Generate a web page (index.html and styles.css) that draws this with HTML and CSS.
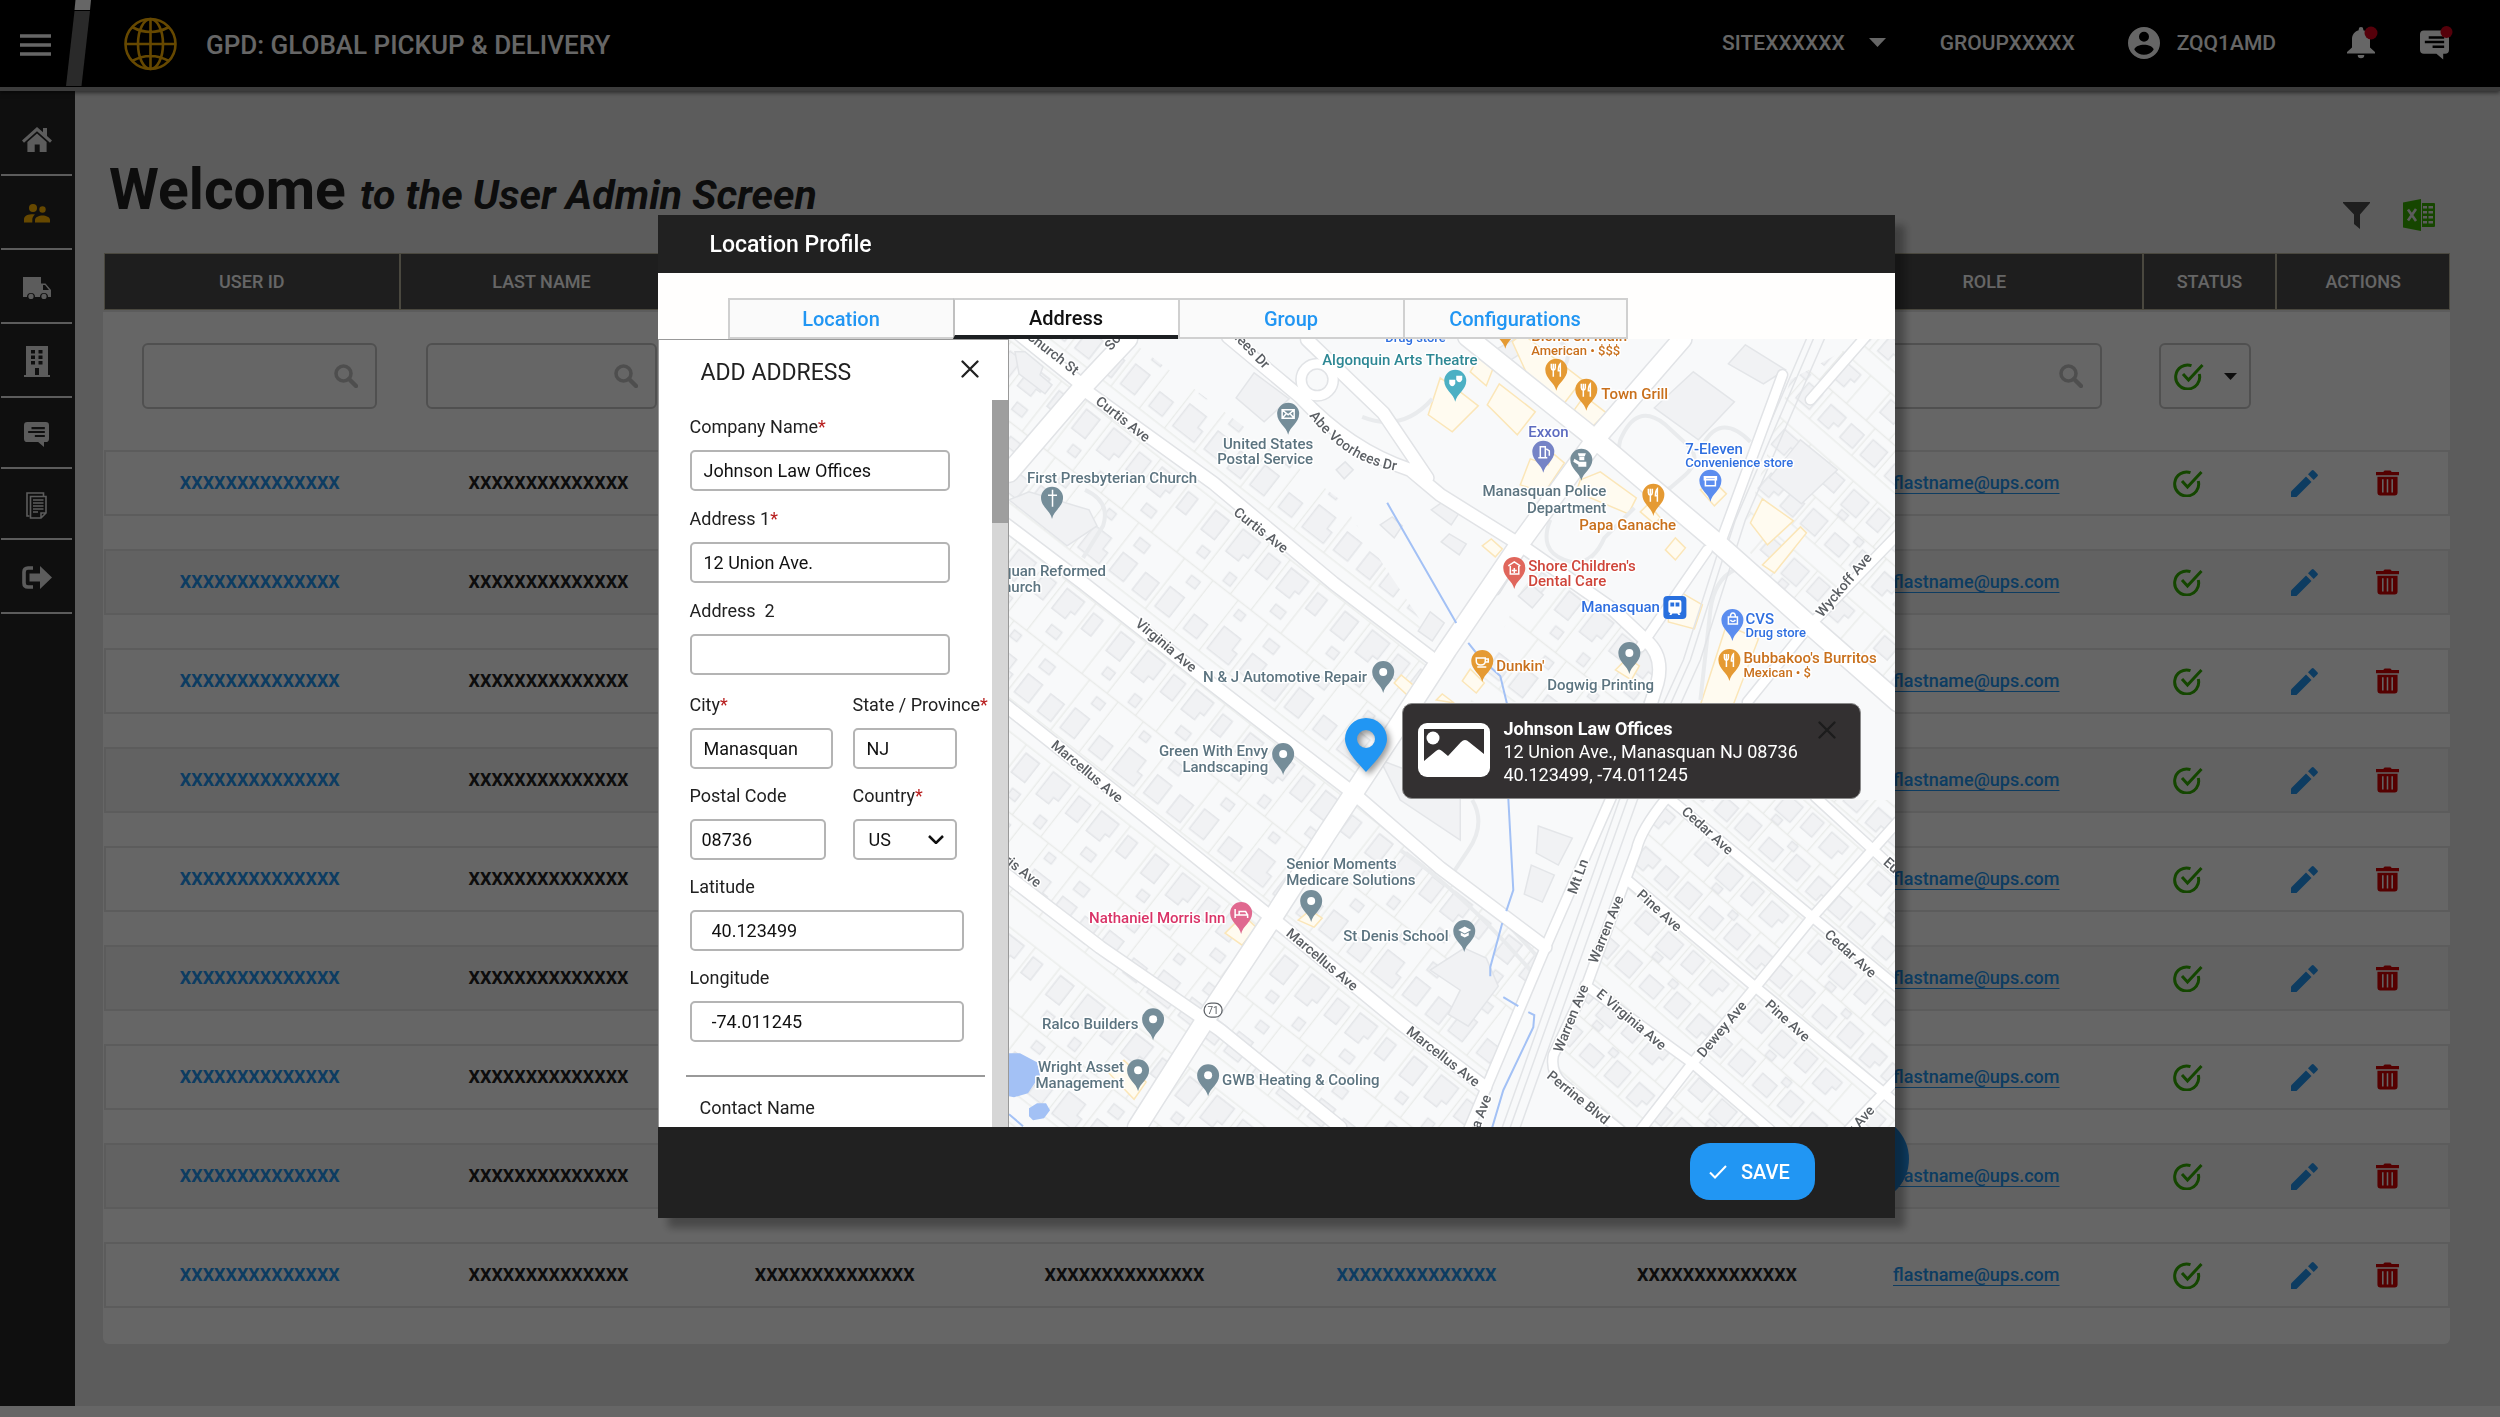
FILE: index.html
```html
<!DOCTYPE html>
<html lang="en">
<head>
<meta charset="utf-8">
<meta name="viewport" content="width=device-width, initial-scale=1">
<title>GPD: Global Pickup &amp; Delivery</title>
<link rel="stylesheet" href="styles.css">
</head>
<body>
<svg class="defs" aria-hidden="true">
  <symbol id="i-search" viewBox="0 0 24 24"><circle cx="9.5" cy="9.5" r="7.5" fill="none" stroke="currentColor" stroke-width="3.6"/><path d="M15 15l7 7" stroke="currentColor" stroke-width="4.4" stroke-linecap="round"/></symbol>
  <symbol id="i-ok" viewBox="0 0 30 28"><path d="M17.500 3.600A12 12 0 1 0 25.300 12" fill="none" stroke="currentColor" stroke-width="3"/><path d="M9 12l5.500 6L28.500 3" fill="none" stroke="currentColor" stroke-width="3"/></symbol>
  <symbol id="i-edit" viewBox="0 0 27 27"><path d="M0 21.500V27h5.500L20.500 12 15 6.500z"/><path d="M26.400 6.300a1.500 1.500 0 0 0 0-2.100L22.800.6a1.500 1.500 0 0 0-2.100 0L17 4.300 22.700 10z"/></symbol>
  <symbol id="i-trash" viewBox="0 0 24 26"><path fill-rule="evenodd" d="M0 1.500h7.500L9 0h6l1.500 1.500H24V5H0zM1.500 6.500h21V23a3 3 0 0 1-3 3h-15a3 3 0 0 1-3-3zM6.300 9v14h1.600V9zm4.900 0v14h1.600V9zm4.900 0v14h1.600V9z"/></symbol>
  <symbol id="i-chat" viewBox="0 0 30 30"><path fill-rule="evenodd" d="M4 0h22a4 4 0 0 1 4 4v16a4 4 0 0 1-4 4h-2l0 6-7-6H4a4 4 0 0 1-4-4V4a4 4 0 0 1 4-4zM9 6v2.600h16V6zM5 10.700v2.600h20v-2.600zM13 15.500v2.600h12v-2.600z"/></symbol>
  <symbol id="i-close" viewBox="0 0 18 18"><path d="M1.500 1.500l15 15M16.500 1.500l-15 15" stroke="currentColor" stroke-width="2.300" stroke-linecap="round"/></symbol>
</svg>

<header class="topbar">
  <button class="icon-btn menu" aria-label="Menu"><svg width="31" height="22" viewBox="0 0 31 22"><path d="M0 2h31M0 11h31M0 20h31" stroke="currentColor" stroke-width="3.400"/></svg></button>
  <svg class="slash" width="26" height="87" viewBox="0 0 26 87" aria-hidden="true"><path d="M9.500 0H25L24 10H8.500z" fill="#fff"/><path d="M8.500 11H24L15.500 86H0z" fill="#696969"/></svg>
  <svg class="globe" width="53" height="54" viewBox="0 0 53 54" aria-hidden="true"><g fill="none" stroke="#ffb500" stroke-width="2.600"><circle cx="26.500" cy="27" r="25"/><ellipse cx="26.500" cy="27" rx="12.500" ry="25"/><path d="M26.500 2v50M1.500 27h50M8 10q18.500 10 37 0M8 44q18.500-10 37 0"/></g></svg>
  <div class="brand">GPD: GLOBAL PICKUP &amp; DELIVERY</div>
  <button class="icon-btn site">SITEXXXXXX <svg width="17" height="9" viewBox="0 0 17 9"><path d="M0 0h17L8.500 9z"/></svg></button>
  <span class="group">GROUPXXXXX</span>
  <button class="icon-btn user"><svg width="32" height="32" viewBox="0 0 32 32"><path fill-rule="evenodd" d="M16 0a16 16 0 1 1 0 32 16 16 0 0 1 0-32zm0 4.800a5 5 0 1 0 0 10 5 5 0 0 0 0-10zm0 13c-4 0-9.600 2-9.600 4.900a11.500 11.500 0 0 0 19.200 0c0-2.900-5.600-4.900-9.600-4.900z"/></svg>ZQQ1AMD</button>
  <button class="icon-btn bell" aria-label="Notifications"><svg width="32" height="34" viewBox="0 0 32 34"><path d="M14 1a2.300 2.300 0 0 1 2.300 2.300v1C20.500 5.300 23 9 23 13v8.500L28 26v1.500H0V26l5-4.500V13c0-4 2.500-7.700 6.700-8.700v-1A2.300 2.300 0 0 1 14 1zM10.700 29h6.600a3.300 3.300 0 0 1-6.600 0z"/><circle cx="24" cy="7" r="6.500" fill="#d4001a"/></svg></button>
  <button class="icon-btn msgs" aria-label="Messages"><svg width="34" height="34" viewBox="0 0 34 34"><use href="#i-chat" x="0" y="4" width="29" height="30"/><circle cx="26.500" cy="6" r="6" fill="#d4001a"/></svg></button>
</header>

<div class="shell">
  <nav class="side" aria-label="Main">
    <a href="#home" aria-label="Home"><svg width="30" height="25" viewBox="0 0 30 25"><path d="M15 0l6 5.300V1h4v8l5 4.500-2 2.200L15 4.300 2 15.700 0 13.500z"/><path fill-rule="evenodd" d="M15 6.600l9.600 8.400V25H5.400V15zM12.700 17.500V25h5v-7.500z"/></svg></a>
    <a href="#users" class="on" aria-label="Users"><svg width="26" height="19" viewBox="0 0 26 19"><circle cx="9" cy="4" r="4"/><circle cx="18.500" cy="5.500" r="3.200"/><path d="M0 18.500v-3c0-4 4.500-5.200 9-5.200l2 .1c-1.500 1-2.700 3-2.700 5v3z"/><path d="M11 18.500v-2.500c0-3 4-4.500 7.500-4.500S26 13 26 16v2.500z"/></svg></a>
    <a href="#fleet" aria-label="Fleet"><svg width="28" height="22" viewBox="0 0 28 22"><path fill-rule="evenodd" d="M0 0h18v6.500h4.500L28 13v7h-3a4 4 0 0 0-8 0h-5a4 4 0 0 0-8 0H0zM20 8v5h6l-4-5z"/><circle cx="8" cy="19.400" r="2.600"/><circle cx="21" cy="19.400" r="2.600"/></svg></a>
    <a href="#sites" aria-label="Sites"><svg width="26" height="31" viewBox="0 0 26 31"><path fill-rule="evenodd" d="M2 0h22v29h2v2H0v-2h2zM7 4v3.500h4V4zm7.500 0v3.500h4V4zM7 9.500V13h4V9.500zm7.500 0V13h4V9.500zM7 15v3.500h4V15zm7.500 0v3.500h4V15zM11 22v7h4v-7z"/></svg></a>
    <a href="#messages" aria-label="Messages"><svg width="25" height="25"><use href="#i-chat"/></svg></a>
    <a href="#reports" aria-label="Reports"><svg width="21" height="27" viewBox="0 0 21 27"><g fill="none" stroke="currentColor" stroke-width="1.600"><path d="M3.500 24H1V1h16.500v3"/><path d="M4.500 4.500H20V21l-5 5H4.500zM15 26v-5h5M7 8h10.500M7 11h10.500M7 14h10.500M7 17h10.500M7 20h5"/></g></svg></a>
    <a href="#logout" aria-label="Log out"><svg width="30" height="23" viewBox="0 0 30 23"><path d="M11 2H6Q2 2 2 6v11q0 4 4 4h5" fill="none" stroke="currentColor" stroke-width="3.600"/><path d="M7.500 7.500H18V0l12 11.500L18 23v-7.500H7.500z"/></svg></a>
  </nav>

  <main class="main">
    <div class="head">
      <h1>Welcome <em>to the User Admin Screen</em></h1>
      <button class="icon-btn filter" aria-label="Filter"><svg width="27" height="27" viewBox="0 0 27 27"><path d="M0 0h27v1L17 12.500V27l-6-5v-9.500L0 1z"/></svg></button>
      <button class="icon-btn excel" aria-label="Export to Excel"><svg width="32" height="32" viewBox="0 0 32 32"><path d="M0 3.500L18 0v32L0 28.500z"/><path fill-rule="evenodd" d="M19 4h12q1 0 1 1v22q0 1-1 1H19zM20 7v2.500h4V7zm5.500 0v2.500H30V7zM20 12v2.500h4V12zm5.500 0v2.500H30V12zM20 17v2.500h4V17zm5.500 0v2.500H30V17zM20 22v2.500h4V22zm5.500 0v2.500H30V22z"/><path d="M5 10.500l8 11.500M13 10L5 21.500" stroke="#e6e6e6" stroke-width="2.600"/></svg></button>
    </div>
    <div class="panel">
      <table class="grid">
        <colgroup><col class="c1"><col class="c2"><col class="c3"><col class="c4"><col class="c5"><col class="c6"><col class="c7"><col class="c8"><col class="c9"></colgroup>
        <thead><tr><th>USER ID</th><th>LAST NAME</th><th>FIRST NAME</th><th>PHONE</th><th>SITE</th><th>GROUP</th><th>ROLE</th><th>STATUS</th><th>ACTIONS</th></tr></thead>
        <tbody>
          <tr class="filters">
            <td><label class="search"><input type="text" aria-label="Filter user ID"><svg><use href="#i-search"/></svg></label></td>
            <td><label class="search"><input type="text" aria-label="Filter last name"><svg><use href="#i-search"/></svg></label></td>
            <td></td><td></td><td></td><td></td>
            <td><label class="search"><input type="text" aria-label="Filter role"><svg><use href="#i-search"/></svg></label></td>
            <td><button class="pick" aria-label="Filter status"><svg class="ok"><use href="#i-ok"/></svg><svg width="13" height="7" viewBox="0 0 13 7"><path d="M0 0h13L6.500 7z"/></svg></button></td>
            <td></td>
          </tr>
          <tr><td><a href="#u1">XXXXXXXXXXXXXX</a></td><td>XXXXXXXXXXXXXX</td><td>XXXXXXXXXXXXXX</td><td>XXXXXXXXXXXXXX</td><td><a href="#s1">XXXXXXXXXXXXXX</a></td><td>XXXXXXXXXXXXXX</td><td><a class="mail" href="mailto:flastname@ups.com">flastname@ups.com</a></td><td><svg class="ok"><use href="#i-ok"/></svg></td><td><button class="icon-btn edit" aria-label="Edit"><svg><use href="#i-edit"/></svg></button><button class="icon-btn del" aria-label="Delete"><svg><use href="#i-trash"/></svg></button></td></tr>
          <tr><td><a href="#u2">XXXXXXXXXXXXXX</a></td><td>XXXXXXXXXXXXXX</td><td>XXXXXXXXXXXXXX</td><td>XXXXXXXXXXXXXX</td><td><a href="#s2">XXXXXXXXXXXXXX</a></td><td>XXXXXXXXXXXXXX</td><td><a class="mail" href="mailto:flastname@ups.com">flastname@ups.com</a></td><td><svg class="ok"><use href="#i-ok"/></svg></td><td><button class="icon-btn edit" aria-label="Edit"><svg><use href="#i-edit"/></svg></button><button class="icon-btn del" aria-label="Delete"><svg><use href="#i-trash"/></svg></button></td></tr>
          <tr><td><a href="#u3">XXXXXXXXXXXXXX</a></td><td>XXXXXXXXXXXXXX</td><td>XXXXXXXXXXXXXX</td><td>XXXXXXXXXXXXXX</td><td><a href="#s3">XXXXXXXXXXXXXX</a></td><td>XXXXXXXXXXXXXX</td><td><a class="mail" href="mailto:flastname@ups.com">flastname@ups.com</a></td><td><svg class="ok"><use href="#i-ok"/></svg></td><td><button class="icon-btn edit" aria-label="Edit"><svg><use href="#i-edit"/></svg></button><button class="icon-btn del" aria-label="Delete"><svg><use href="#i-trash"/></svg></button></td></tr>
          <tr><td><a href="#u4">XXXXXXXXXXXXXX</a></td><td>XXXXXXXXXXXXXX</td><td>XXXXXXXXXXXXXX</td><td>XXXXXXXXXXXXXX</td><td><a href="#s4">XXXXXXXXXXXXXX</a></td><td>XXXXXXXXXXXXXX</td><td><a class="mail" href="mailto:flastname@ups.com">flastname@ups.com</a></td><td><svg class="ok"><use href="#i-ok"/></svg></td><td><button class="icon-btn edit" aria-label="Edit"><svg><use href="#i-edit"/></svg></button><button class="icon-btn del" aria-label="Delete"><svg><use href="#i-trash"/></svg></button></td></tr>
          <tr><td><a href="#u5">XXXXXXXXXXXXXX</a></td><td>XXXXXXXXXXXXXX</td><td>XXXXXXXXXXXXXX</td><td>XXXXXXXXXXXXXX</td><td><a href="#s5">XXXXXXXXXXXXXX</a></td><td>XXXXXXXXXXXXXX</td><td><a class="mail" href="mailto:flastname@ups.com">flastname@ups.com</a></td><td><svg class="ok"><use href="#i-ok"/></svg></td><td><button class="icon-btn edit" aria-label="Edit"><svg><use href="#i-edit"/></svg></button><button class="icon-btn del" aria-label="Delete"><svg><use href="#i-trash"/></svg></button></td></tr>
          <tr><td><a href="#u6">XXXXXXXXXXXXXX</a></td><td>XXXXXXXXXXXXXX</td><td>XXXXXXXXXXXXXX</td><td>XXXXXXXXXXXXXX</td><td><a href="#s6">XXXXXXXXXXXXXX</a></td><td>XXXXXXXXXXXXXX</td><td><a class="mail" href="mailto:flastname@ups.com">flastname@ups.com</a></td><td><svg class="ok"><use href="#i-ok"/></svg></td><td><button class="icon-btn edit" aria-label="Edit"><svg><use href="#i-edit"/></svg></button><button class="icon-btn del" aria-label="Delete"><svg><use href="#i-trash"/></svg></button></td></tr>
          <tr><td><a href="#u7">XXXXXXXXXXXXXX</a></td><td>XXXXXXXXXXXXXX</td><td>XXXXXXXXXXXXXX</td><td>XXXXXXXXXXXXXX</td><td><a href="#s7">XXXXXXXXXXXXXX</a></td><td>XXXXXXXXXXXXXX</td><td><a class="mail" href="mailto:flastname@ups.com">flastname@ups.com</a></td><td><svg class="ok"><use href="#i-ok"/></svg></td><td><button class="icon-btn edit" aria-label="Edit"><svg><use href="#i-edit"/></svg></button><button class="icon-btn del" aria-label="Delete"><svg><use href="#i-trash"/></svg></button></td></tr>
          <tr><td><a href="#u8">XXXXXXXXXXXXXX</a></td><td>XXXXXXXXXXXXXX</td><td>XXXXXXXXXXXXXX</td><td>XXXXXXXXXXXXXX</td><td><a href="#s8">XXXXXXXXXXXXXX</a></td><td>XXXXXXXXXXXXXX</td><td><a class="mail" href="mailto:flastname@ups.com">flastname@ups.com</a></td><td><svg class="ok"><use href="#i-ok"/></svg></td><td><button class="icon-btn edit" aria-label="Edit"><svg><use href="#i-edit"/></svg></button><button class="icon-btn del" aria-label="Delete"><svg><use href="#i-trash"/></svg></button></td></tr>
          <tr><td><a href="#u9">XXXXXXXXXXXXXX</a></td><td>XXXXXXXXXXXXXX</td><td>XXXXXXXXXXXXXX</td><td>XXXXXXXXXXXXXX</td><td><a href="#s9">XXXXXXXXXXXXXX</a></td><td>XXXXXXXXXXXXXX</td><td><a class="mail" href="mailto:flastname@ups.com">flastname@ups.com</a></td><td><svg class="ok"><use href="#i-ok"/></svg></td><td><button class="icon-btn edit" aria-label="Edit"><svg><use href="#i-edit"/></svg></button><button class="icon-btn del" aria-label="Delete"><svg><use href="#i-trash"/></svg></button></td></tr>
        </tbody>
      </table>
      <button class="fab" aria-label="Add user"></button>
    </div>
  </main>
</div>

<div class="overlay">
  <section class="modal" role="dialog" aria-labelledby="dlg-title">
    <h2 class="modal-head" id="dlg-title">Location Profile</h2>
    <div class="tabs" role="tablist">
      <button role="tab">Location</button><button role="tab" aria-selected="true">Address</button><button role="tab">Group</button><button role="tab">Configurations</button>
    </div>
    <div class="modal-body">
      <form class="form">
        <div class="form-head"><h3>ADD ADDRESS</h3><button type="button" class="icon-btn" aria-label="Close"><svg width="18" height="18"><use href="#i-close"/></svg></button></div>
        <div class="scroll">
          <div class="fields">
            <div class="stack">
              <div class="field"><label for="company">Company Name<b>*</b></label><input id="company" value="Johnson Law Offices"></div>
              <div class="field"><label for="a1">Address 1<b>*</b></label><input id="a1" value="12 Union Ave."></div>
              <div class="field"><label for="a2">Address &nbsp;2</label><input id="a2"></div>
            </div>
            <div class="pairs">
              <div class="field"><label for="city">City<b>*</b></label><input id="city" value="Manasquan"></div>
              <div class="field"><label for="state">State / Province<b>*</b></label><input id="state" value="NJ"></div>
              <div class="field postal"><label for="zip">Postal Code</label><input id="zip" value="08736"></div>
              <div class="field"><label for="country">Country<b>*</b></label><select id="country"><option>US</option></select></div>
              <div class="field wide"><label for="lat">Latitude</label><input id="lat" value="40.123499"></div>
              <div class="field wide"><label for="lon">Longitude</label><input id="lon" value="-74.011245"></div>
            </div>
            <hr>
            <div class="contact">Contact Name</div>
          </div>
          <div class="bar" aria-hidden="true"><div class="thumb"></div></div>
        </div>
      </form>
      <div class="map">
        <svg class="tiles" viewBox="1009 339 886 788" preserveAspectRatio="xMidYMid slice" role="img" aria-label="Map of Manasquan">
          <defs>
            <pattern id="lots" width="164" height="154" patternUnits="userSpaceOnUse" patternTransform="translate(1213 483) rotate(38)">
              <path d="M0 13H164M0 77H164M0 141H164M14 13V77M46 13V77M82 13V77M108 13V77M146 13V77M24 77V141M60 77V141M92 77V141M130 77V141" class="lot"/>
              <path class="bld" d="M19 20h17v24h-17zM52 18h22v20h-6v8h-16zM87 21h15v22h-15zM114 19h22v16h-5v9h-17zM150 22h12v20h-12zM2 112h17v22h-17zM30 108h18v25h-18zM66 115h17v18h-17zM97 106h21v14h6v14h-27zM136 110h18v23h-18zM30 56h10v9h-10zM68 60h9v11h-9zM124 57h13v9h-13zM40 86h11v9h-11zM98 84h9v8h-9zM140 88h13v10h-13z"/>
            </pattern>
            <pattern id="lots2" width="150" height="91" patternUnits="userSpaceOnUse" patternTransform="translate(1755 987) rotate(41)">
              <path d="M0 9H150M0 46H150M0 82H150M12 9V46M42 9V46M74 9V46M100 9V46M136 9V46M24 46V82M54 46V82M88 46V82M118 46V82" class="lot"/>
              <path class="bld" d="M17 14h18v17h-18zM48 15h20v20h-20zM79 13h15v19h-15zM106 15h22v10h-5v10h-17zM3 58h17v18h-17zM30 56h19v20h-19zM62 60h19v16h-19zM94 55h18v20h-18zM125 57h20v12h-6v8h-14zM52 38h9v7h-9zM82 48h8v7h-8z"/>
            </pattern>
            <symbol id="pin" viewBox="-11 -11 22 33" overflow="visible"><path d="M0 21C-1.500 13-11 9-11 0a11 11 0 0 1 22 0C11 9 1.500 13 0 21z"/></symbol>
            <symbol id="food" viewBox="-11 -11 22 33" overflow="visible"><use href="#pin" x="-11" y="-11" width="22" height="33"/><path d="M-5-6v4q0 2 2 2.500V7M-1-6v4q0 2-2 2.500V-6M4 7V-6q-2 2-2 7h2" fill="none" stroke="#fff" stroke-width="1.500"/></symbol>
            <path id="abe" d="M1309 416C1328 440 1352 463 1396 471"/>
          </defs>
          <rect x="1009" y="339" width="886" height="788" fill="#f8f9fa"/>
          <path d="M1128 339L1340 500 1440 650 1360 790 1545 947 1470 1127H1009V339z" fill="url(#lots)"/>
          <path d="M1667 800L1640 843 1552 1065 1620 1127H1895V800zM1865 339H1895V700L1800 620 1740 540 1790 380z" fill="url(#lots2)"/>
          <path d="M1535 560L1660 640 1650 702H1470z" fill="url(#lots)"/>
          <g class="bld">
            <path d="M1693 372l41 30-36 38-44-32zM1745 345l40 25-22 14-35-20zM1800 440l37 30-36 34-32-26zM1254 373l35 26-25 23-28-24zM1025 352l18 15-3 8 12 10-7 9-26-20-4-22zM1009 500l20-8 60 18 8 16-30 20zM1538 826l34 12-14 27-22-12zM1531 865l23 10-12 27-18-8zM1464 948l22 10 12 28-30 40-20-12 12-24-30-20zM1380 760l80 30v50l-60-40z"/>
            <path d="M1336 470l9-8 8 8-9 9zM1431 510l10-7 18 10-8 12zM1441 542l8-8 17 10-7 11zM1430 612l14 11-12 18-14-10zM1518 596l12-12 13 11-11 13zM1380 525l12-8 10 9-8 12zM1495 350l18-10 10 12-14 9z"/>
          </g>
          <g class="shop">
            <path d="M1440 378l20 14 18 14-26 26-24-17zM1470 372l15-24 12 10-11 28zM1487 405l12-21 36 28-18 23zM1512 342l10-8 60 46-20 26-30-20zM1574 410l10-14 22 17-16 16zM1520 485l10-26 18 6 4-12 12 10-20 30zM1580 480l20-8 36 26-8 16-52-22zM1640 512l8-8 12 14-6 6zM1700 490l12-10 14 14-12 12zM1762 499l31 22-26 24-17-22zM1800 527l6 6-32 40-12-8zM1482 546l9-7 11 10-7 8zM1665 550l10-12 10 10-10 12zM1668 605l10-14 24 14-8 24-26-7zM1700 705l26-80 32 14-26 68zM1462 681l8-12 14 14-8 10zM1615 670l12-12 12 8-8 14zM1394 683l7-8 13 11-6 10zM1298 920l12-10 12 8-8 9zM1225 933l18-18 13 12-14 18zM1108 1072l16-12 22 22-12 17zM1436 700l6-6 12 9z"/>
          </g>
          <g class="lane">
            <path d="M1555 339q20 10 8 30M1620 440q16-38 44-16l24 22q14 14-4 30l-14 12q-12 6-22-4l-24-22q-8-8-4-22zM1700 450q18-40 50-8M1550 520q-12 30 14 40t40-22l30-30M1362 417q40 16 70-18M1400 850q60 40 130 120M1410 840q60 40 130 120M1472 800q14 24-4 50l-20 30M1700 700l10-90q4-30 24-40M1085 490q26 12 18 36l-20 32"/>
          </g>
          <g class="rail"><path d="M1813 339L1735 520 1690 660 1627 800 1510 1127M1824 339L1745 520 1700 660 1637 800 1520 1127M1806 339L1728 520 1683 660 1619 800 1502 1127"/></g>
          <g class="edge">
            <path class="w16" d="M1128 339L1082 388 1009 473M1137 1127L1207 1017 1273 917 1327 833 1397 727 1447 650 1520 543 1597 437 1682 339M1467 337L1587 433 1717 543 1807 623 1897 702"/>
            <path class="w11" d="M1020 335L1082 385M1087 392L1213 483 1333 583 1430 657M1005 524L1083 583 1213 685 1353 793 1440 868 1545 947M1005 705L1150 820 1283 927 1400 1023 1485 1087M1005 874L1100 947 1220 1030 1340 1127M1228 337L1300 397C1340 440 1380 460 1410 470L1440 495 1520 545 1613 610 1645 640Q1664 656 1657 683L1650 705M1307 340L1383 413 1427 478"/>
            <path class="w8" d="M1782 375L1720 543M1810 400L1865 337M1897 535L1807 628 1747 702M1707 550L1640 647M1612 795L1547 943 1468 1130M1667 797Q1640 830 1636 850L1587 983 1553 1055Q1550 1072 1562 1083L1620 1130M1667 797L1812 917 1897 987M1627 880L1755 987 1897 1104M1585 985L1692 1063 1770 1130M1897 822L1812 917 1755 987 1692 1063 1640 1130M1815 797L1873 850 1897 872M1897 1078L1848 1130M1550 503L1495 590"/>
            <circle class="w8" cx="1317" cy="380" r="16"/>
          </g>
          <g class="road">
            <path class="w16" d="M1128 339L1082 388 1009 473M1137 1127L1207 1017 1273 917 1327 833 1397 727 1447 650 1520 543 1597 437 1682 339M1467 337L1587 433 1717 543 1807 623 1897 702"/>
            <path class="w11" d="M1020 335L1082 385M1087 392L1213 483 1333 583 1430 657M1005 524L1083 583 1213 685 1353 793 1440 868 1545 947M1005 705L1150 820 1283 927 1400 1023 1485 1087M1005 874L1100 947 1220 1030 1340 1127M1228 337L1300 397C1340 440 1380 460 1410 470L1440 495 1520 545 1613 610 1645 640Q1664 656 1657 683L1650 705M1307 340L1383 413 1427 478"/>
            <path class="w8" d="M1782 375L1720 543M1810 400L1865 337M1897 535L1807 628 1747 702M1707 550L1640 647M1612 795L1547 943 1468 1130M1667 797Q1640 830 1636 850L1587 983 1553 1055Q1550 1072 1562 1083L1620 1130M1667 797L1812 917 1897 987M1627 880L1755 987 1897 1104M1585 985L1692 1063 1770 1130M1897 822L1812 917 1755 987 1692 1063 1640 1130M1815 797L1873 850 1897 872M1897 1078L1848 1130"/>
            <circle class="w8" cx="1317" cy="380" r="16"/>
          </g>
          <path class="creek" d="M1387 503L1456 623M1468 643L1480 658 1500 676 1507 705M1508 798L1513 890 1506 911M1502 923L1490 967V976M1503 997L1518 1006M1528 1012L1534 1015 1533 1027 1503 1090 1492 1127M1009 1114L1023 1126"/>
          <path fill="#a3c1f5" d="M1009 1053h11l17 9 3 13-12 18-14 4-5-1zM1029 1108l8-5h9l4 7-6 8-11 2-4-4z"/>

          <g class="street">
            <text transform="translate(1050 357) rotate(38)">Church St</text>
            <text transform="translate(1120 423) rotate(38)">Curtis Ave</text>
            <text transform="translate(1258 534) rotate(38)">Curtis Ave</text>
            <text transform="translate(1163 649) rotate(40)">Virginia Ave</text>
            <text transform="translate(1084 775) rotate(40)">Marcellus Ave</text>
            <text transform="translate(1010 867) rotate(38)">Morris Ave</text>
            <text transform="translate(1319 963) rotate(40)">Marcellus Ave</text>
            <text transform="translate(1440 1060) rotate(38)">Marcellus Ave</text>
            <text transform="translate(1128 331) rotate(-50)">South St</text>
            <text transform="translate(1237 342) rotate(46)">Voorhees Dr</text>
            <text transform="translate(1582 878) rotate(-70)">Mt Ln</text>
            <text transform="translate(1610 931) rotate(-68)">Warren Ave</text>
            <text transform="translate(1575 1020) rotate(-68)">Warren Ave</text>
            <text transform="translate(1656 914) rotate(42)">Pine Ave</text>
            <text transform="translate(1784 1024) rotate(42)">Pine Ave</text>
            <text transform="translate(1704 834) rotate(42)">Cedar Ave</text>
            <text transform="translate(1847 957) rotate(42)">Cedar Ave</text>
            <text transform="translate(1628 1023) rotate(40)">E Virginia Ave</text>
            <text transform="translate(1725 1032) rotate(-50)">Dewey Ave</text>
            <text transform="translate(1575 1101) rotate(39)">Perrine Blvd</text>
            <text transform="translate(1847 588) rotate(-50)">Wyckoff Ave</text>
            <text transform="translate(1478 1133) rotate(-70)">Minerva Ave</text>
            <text transform="translate(1852 1136) rotate(-48)">Dewey Ave</text>
            <text transform="translate(1906 885) rotate(42)">Euclid Ave</text>
            <text class="along"><textPath href="#abe">Abe Voorhees Dr</textPath></text>
          </g>
          <rect x="1204" y="1003" width="18" height="14" rx="7" fill="#fff" stroke="#5f6368" stroke-width="1.300"/>
          <text class="shield" x="1213" y="1014">71</text>

          <g class="gray">
            <text x="1027" y="483">First Presbyterian Church</text>
            <text class="end" x="1106" y="576">Manasquan Reformed</text><text class="end" x="1041" y="592">Church</text>
            <text class="end" x="1313" y="449">United States</text><text class="end" x="1313" y="464">Postal Service</text>
            <text class="end" x="1606" y="496">Manasquan Police</text><text class="end" x="1606" y="513">Department</text>
            <text x="1547" y="690">Dogwig Printing</text>
            <text x="1203" y="682">N &amp; J Automotive Repair</text>
            <text class="end" x="1268" y="756">Green With Envy</text><text class="end" x="1268" y="772">Landscaping</text>
            <text x="1286" y="869">Senior Moments</text><text x="1286" y="885">Medicare Solutions</text>
            <text x="1343" y="941">St Denis School</text>
            <text x="1042" y="1029">Ralco Builders</text>
            <text class="end" x="1124" y="1072">Wright Asset</text><text class="end" x="1124" y="1088">Management</text>
            <text x="1222" y="1085">GWB Heating &amp; Cooling</text>
          </g>
          <g class="orange">
            <text x="1531" y="341">Blend on Main</text><text class="sub" x="1531" y="355">American • $$$</text>
            <text x="1601" y="399">Town Grill</text>
            <text x="1579" y="530">Papa Ganache</text>
            <text x="1496" y="671">Dunkin'</text>
            <text x="1743" y="663">Bubbakoo's Burritos</text><text class="sub" x="1743" y="677">Mexican • $</text>
          </g>
          <g class="blue">
            <text class="sub" x="1385" y="342">Drug store</text>
            <text x="1685" y="454">7-Eleven</text><text class="sub" x="1685" y="467">Convenience store</text>
            <text x="1745" y="624">CVS</text><text class="sub" x="1745" y="637">Drug store</text>
            <text x="1581" y="612">Manasquan</text>
          </g>
          <text class="teal" x="1322" y="365">Algonquin Arts Theatre</text>
          <text class="indigo" x="1528" y="437">Exxon</text>
          <g class="red"><text x="1528" y="571">Shore Children's</text><text x="1528" y="586">Dental Care</text></g>
          <text class="pink" x="1089" y="923">Nathaniel Morris Inn</text>

          <g fill="#758d99">
            <use href="#pin" x="1041" y="487" width="22" height="33"/><use href="#pin" x="1277" y="403" width="22" height="33"/><use href="#pin" x="1570" y="449" width="22" height="33"/>
            <use href="#pin" x="1618" y="642" width="22" height="33"/><use href="#pin" x="1372" y="661" width="22" height="33"/><use href="#pin" x="1272" y="743" width="22" height="33"/>
            <use href="#pin" x="1300" y="890" width="22" height="33"/><use href="#pin" x="1453" y="920" width="22" height="33"/><use href="#pin" x="1142" y="1008" width="22" height="33"/>
            <use href="#pin" x="1127" y="1059" width="22" height="33"/><use href="#pin" x="1197" y="1064" width="22" height="33"/>
          </g>
          <g fill="#fff"><circle cx="1629" cy="653" r="4"/><circle cx="1383" cy="672" r="4"/><circle cx="1283" cy="754" r="4"/><circle cx="1311" cy="901" r="4"/><circle cx="1153" cy="1019" r="4"/><circle cx="1138" cy="1070" r="4"/><circle cx="1208" cy="1075" r="4"/></g>
          <g fill="#e59a33"><use href="#food" x="1494" y="317" width="22" height="33"/><use href="#food" x="1545" y="359" width="22" height="33"/><use href="#food" x="1575" y="379" width="22" height="33"/><use href="#food" x="1642" y="484" width="22" height="33"/><use href="#food" x="1718" y="649" width="22" height="33"/><use href="#pin" x="1471" y="650" width="22" height="33"/></g>
          <g fill="#5b8def"><use href="#pin" x="1699" y="470" width="22" height="33"/><use href="#pin" x="1721" y="609" width="22" height="33"/></g>
          <use href="#pin" x="1444" y="370" width="22" height="33" fill="#4cb0c4"/>
          <use href="#pin" x="1532" y="441" width="22" height="33" fill="#7583c6"/>
          <use href="#pin" x="1503" y="557" width="22" height="33" fill="#e0665c"/>
          <use href="#pin" x="1230" y="902" width="22" height="33" fill="#e0688f"/>
          <g fill="none" stroke="#fff" stroke-width="1.500">
            <path d="M1052.500 490v17M1048 495.500h9"/>
            <path d="M1282 410h12v8.500h-12zM1282 410l6 5 6-5M1282 418.500l4.500-5M1294 418.500l-4.500-5"/>
            <path d="M1235 909v9M1235 915h12.500v3M1239 915v-3.500h6.500l2 3.500"/>
            <path d="M1508 566l6-4 6 4M1510 566v8h8.500v-8M1514 568v5M1511.500 570.500h5"/>
            <path d="M1540 458v-11h5v11M1538 458h9M1546 449l3 2v5M1705 478h10v8h-10zM1704 477h12v3h-12z"/>
            <path d="M1728 617h9v7h-9zM1730 617q0-4 2.500-4t2.500 4M1730 620q2.500 3 5 0"/>
            <path d="M1476 658h9v3q0 4-4.500 4t-4.500-4zM1485 659h3v3h-3M1477 667h9"/>
          </g>
          <g fill="#fff">
            <path d="M1458 930l6.500-3.500 6.500 3.500-6.500 3.500zM1460.500 932.500l4 2 4-2v3l-4 2-4-2z"/>
            <path d="M1577.500 453.500h8l-1 3h-6zM1579 457h5v3.500h-5zM1574 459l5 3h7v5h-8v-2l-5-3z"/>
            <path d="M1449 380h6v4q-3 5-6 0zM1456 376h6v4q-3 5-6 0z"/>
          </g>
          <rect x="1663" y="596" width="23" height="23" rx="4" fill="#2970de"/>
          <path fill="#fff" fill-rule="evenodd" d="M1670 600h9q2 0 2 2v9q0 2-2 2l1 2h-2l-1-1.500h-5l-1 1.500h-2l1-2q-2 0-2-2v-9q0-2 2-2zm0 2.500v4h3.800v-4zm5.200 0v4h3.800v-4z"/>
        </svg>
        <svg class="marker" width="46" height="58" viewBox="0 0 46 58" aria-hidden="true"><path fill-rule="evenodd" d="M21 0a21 21 0 0 1 21 21c0 12-15 26-21 33C15 47 0 33 0 21A21 21 0 0 1 21 0zm0 12a9 9 0 1 0 0 18 9 9 0 0 0 0-18z" fill="#2196f3"/></svg>
        <div class="popup">
          <svg class="photo" width="72" height="54" viewBox="0 0 72 54" aria-hidden="true"><rect width="72" height="54" rx="9" fill="#fff"/><path d="M6 6h60v25L51 19q-4-4-8 0L30 33l-6-5q-3-3-6 0L6 38z" fill="#333031"/><circle cx="15" cy="15" r="6.500" fill="#fff"/></svg>
          <div><strong>Johnson Law Offices</strong><div>12 Union Ave., Manasquan NJ 08736</div><div>40.123499, -74.011245</div></div>
          <button class="icon-btn" aria-label="Close"><svg width="18" height="18"><use href="#i-close"/></svg></button>
        </div>
      </div>
    </div>
    <footer class="modal-foot"><button class="save"><svg width="18" height="14" viewBox="0 0 18 14"><path d="M1 7.500l5 5L17 1" fill="none" stroke="#fff" stroke-width="2"/></svg>SAVE</button></footer>
  </section>
</div>
</body>
</html>
```

FILE: styles.css
```css
* { box-sizing: border-box; }
body { margin: 0; background: #fff; color: #212121; font: 500 18px/22px Roboto, sans-serif; min-height: 100vh; }
button, input, select { font: inherit; color: inherit; }
svg { display: block; flex: none; fill: currentColor; }
.defs { position: absolute; width: 0; height: 0; }
.icon-btn { display: flex; align-items: center; background: none; border: 0; padding: 0; }

/* Top bar */
.topbar { display: flex; align-items: center; height: 91px; padding: 2px 46px 4px 20px; background: #000; border-bottom: 4px solid #969696; box-shadow: 0 2px 4px rgba(0,0,0,.5); color: #fff; font-size: 21px; position: relative; }
.menu { margin: 4px 15px 0 0; }
.slash { align-self: flex-start; margin-top: -2px; }
.globe { margin: 2px 29px 0 32px; }
.brand { font-size: 26px; line-height: 32px; margin-top: 4px; margin-right: auto; white-space: nowrap; }
.site { gap: 24px; margin-right: 54px; }
.group { margin-right: 53px; }
.user { gap: 17px; margin-right: 71px; }
.bell { margin-right: 41px; }

/* Sidebar */
.shell { display: flex; }
.side { flex: 0 0 75px; background: #262626; padding-right: 3px; }
.side a { display: flex; align-items: center; justify-content: center; height: 74px; margin-left: 1px; padding-top: 3px; border-bottom: 2px solid #e6e6e6; color: #e6e6e6; }
.side a:first-child { height: 85px; padding-top: 14px; }
.side a.on { color: #ffb500; }
.side a:nth-child(n+5):nth-child(-n+6) { height: 71px; }

/* Page */
.main { flex: 1; min-width: 0; background: #e6e6e6; padding: 69px 50px 62px 28px; }
.head { display: flex; align-items: center; height: 60px; padding-left: 6px; }
.head h1 { margin: 4px auto 0 0; font-size: 57px; line-height: 60px; font-weight: 700; white-space: nowrap; }
.head em { font-size: 41px; }
.filter { color: #4b4b4b; margin: 50px 33px 0 0; }
.excel { color: #37b000; margin: 50px 15px 0 0; }
.panel { position: relative; background: linear-gradient(transparent 92px, #fff 92px); padding: 0 0 3px 1px; border-radius: 0 0 6px 6px; }
.grid { width: 100%; border-collapse: separate; border-spacing: 0 33px; table-layout: fixed; }
.c1 { width: 12.6%; } .c2 { width: 12.1%; } .c3 { width: 12.3%; } .c4 { width: 12.4%; } .c5 { width: 12.5%; } .c6 { width: 11.5%; } .c7 { width: 13.5%; } .c8 { width: 5.7%; } .c9 { width: 7.4%; }
.grid th { height: 57px; padding: 0; background: #4b4b4b; border: 1px solid #b9b59e; color: #fff; font-weight: 500; }
.grid td { height: 66px; padding: 0 0 0 14px; text-align: center; font-weight: 700; border: solid #e6e6e6; border-width: 2px 0; }
.grid td:first-child { border-left-width: 2px; }
.grid td:last-child { border-right-width: 2px; }
.grid tr:nth-child(odd):not(.filters) td { background: #f6f6f6; }
.grid td:nth-child(6) { padding-left: 52px; }
.grid td:nth-child(7) { padding: 0 16px 0 0; }
.grid td:nth-child(8) { padding-left: 30px; }
.grid td a { color: #2196f3; text-decoration: none; }
.grid td a.mail { font-weight: 500; text-decoration: underline; text-underline-offset: 4px; }
.grid .filters td { height: 74px; border: 0; vertical-align: top; padding: 0 23px 0 38px; }
.grid .filters td:nth-child(2) { padding: 0 26px 0 26px; }
.grid .filters td:nth-child(7) { padding: 0 41px 0 30px; }
.grid .filters td:nth-child(8) { padding: 0 0 0 16px; }
.search { display: flex; align-items: center; height: 66px; border: 2px solid #c8c8c8; border-radius: 6px; padding-right: 17px; color: #c4c4c4; }
.search input { flex: 1; min-width: 0; height: 60px; border: 0; background: none; }
.search svg { width: 24px; height: 24px; }
.pick { display: flex; align-items: center; gap: 20px; width: 92px; height: 66px; padding: 0 0 0 13px; background: none; border: 2px solid #c8c8c8; border-radius: 6px; }
.ok { width: 30px; height: 28px; color: #32af00; }
.grid td:last-child .icon-btn { display: inline-flex; vertical-align: middle; }
.grid tr:not(.filters) td:last-child { text-align: left; padding-left: 15px; }
.edit { color: #2196f3; margin-right: 58px; }
.edit svg { width: 27px; height: 27px; }
.del { color: #d50000; }
.del svg { width: 23px; height: 26px; }
.fab { position: absolute; left: 73%; top: 894px; width: 93px; height: 90px; border: 0; border-radius: 50%; background: #2196f3; }

/* Modal */
.overlay { position: fixed; inset: 0; background: rgba(0,0,0,.6); padding: 215px 24.2% 0 26.3%; }
.modal { background: #fffefd; box-shadow: 10px 10px 8px rgba(0,0,0,.3); }
.modal-head { margin: 0; height: 58px; padding-left: 52px; background: #212121; color: #fff; font-size: 23px; line-height: 60px; font-weight: 500; }
.tabs { display: grid; grid-template-columns: repeat(4, 225px); height: 66px; padding: 25px 0 0 70px; }
.tabs button { padding: 0; background: #fafafa; border: 2px solid #d0d0d0; border-right-width: 0; color: #2196f3; font-size: 20px; }
.tabs button:last-child { border-right-width: 2px; }
.tabs button[aria-selected] { background: #fff; color: #111; border-bottom: 4px solid #1c1f22; border-left-color: #c0c0c0; }
.modal-body { display: flex; height: 788px; }
.form { flex: 0 0 351px; display: flex; flex-direction: column; background: #fff; border: 1px solid #999; border-bottom: 0; font-weight: 400; }
.form-head { display: flex; align-items: flex-start; height: 60px; padding: 20px 29px 0 42px; }
.form-head h3 { margin: 1px auto 0 0; font-size: 23px; line-height: 24px; font-weight: 400; }
.scroll { display: flex; flex: 1; overflow: hidden; }
.fields { flex: 1; min-width: 0; padding: 16px 0 0 31px; }
.stack { display: grid; gap: 17px; width: 260px; margin-bottom: 19px; }
.pairs { display: grid; grid-template-columns: 143px 104px; gap: 16px 20px; }
.field label { display: block; height: 22px; margin-bottom: 12px; white-space: nowrap; }
.field b { font-weight: 400; color: #b71c1c; }
.field input, .field select { display: block; width: 100%; height: 41px; padding: 0 12px; background: #fff; border: 2px solid #b4b4b4; border-radius: 5px; color: #111; }
.postal input { width: 136px; padding-left: 10px; }
.field select { appearance: none; padding-left: 14px; background: #fff url("data:image/svg+xml,%3Csvg xmlns='http://www.w3.org/2000/svg' width='16' height='9'%3E%3Cpath d='M1 1l7 7 7-7' fill='none' stroke='%23111' stroke-width='2.500'/%3E%3C/svg%3E") no-repeat right 11px center; }
.wide { grid-column: 1 / -1; }
.wide input { width: 274px; padding-left: 20px; }
.fields hr { width: 299px; height: 2px; margin: 33px 0 20px -4px; border: 0; background: #999; }
.contact { padding-left: 10px; }
.bar { flex: 0 0 16px; background: #d6d6d6; }
.thumb { height: 123px; background: #9e9e9e; }
.modal-foot { display: flex; justify-content: flex-end; align-items: center; height: 91px; padding: 0 80px 2px 0; background: #212121; }
.save { display: flex; align-items: center; gap: 14px; width: 125px; height: 57px; padding: 0 0 0 19px; border: 0; border-radius: 20px; background: #2196f3; color: #fff; font-size: 20px; }

/* Map */
.map { position: relative; flex: 1; min-width: 0; overflow: hidden; }
.tiles { width: 100%; height: 100%; font-size: 15px; }
.bld { fill: #f1f2f4; stroke: #e3e5e8; stroke-width: 1.500; }
.lot { fill: none; stroke: #e9ebe9; stroke-width: 1.300; }
.shop { fill: #fffbf0; stroke: #fbe6b8; stroke-width: 1.500; }
.lane { fill: none; stroke: #e9ebed; stroke-width: 4; }
.rail { fill: none; stroke: #e2e4e7; stroke-width: 1.500; }
.edge, .road { fill: none; stroke-linejoin: round; stroke-linecap: round; }
.edge { stroke: #e1e3e6; }
.road { stroke: #fff; }
.edge .w16 { stroke-width: 21px; } .edge .w11 { stroke-width: 15px; } .edge .w8 { stroke-width: 12px; }
.road .w16 { stroke-width: 18px; } .road .w11 { stroke-width: 12px; } .road .w8 { stroke-width: 9px; }
.creek { fill: none; stroke: #a3c1f5; stroke-width: 2; }
.tiles text { stroke: #fff; stroke-width: 3px; stroke-linejoin: round; paint-order: stroke; font-weight: 400; }
.tiles .street text { fill: #5a5e63; font-size: 14px; font-weight: 500; text-anchor: middle; }
.tiles .street .along { text-anchor: start; }
.tiles .end { text-anchor: end; }
.tiles .sub { font-size: 13px; }
.tiles .shield { font-size: 10px; text-anchor: middle; fill: #5f6368; }
.gray text { fill: #5c7480; }
.orange text { fill: #c9701c; }
.blue text { fill: #2f6fe0; }
.tiles .teal { fill: #2d8794; }
.tiles .indigo { fill: #5c6bc0; }
.red text { fill: #cf453a; }
.tiles .pink { fill: #d93367; }
.tiles .gray text, .tiles .orange text, .tiles .blue text, .tiles .red text, .tiles .teal, .tiles .pink, .tiles .indigo { font-weight: 500; }
.marker { position: absolute; left: 336px; top: 379px; filter: drop-shadow(3px 3px 3px rgba(0,0,0,.4)); }
.popup { position: absolute; left: 393px; top: 364px; width: 459px; height: 96px; display: flex; align-items: flex-start; gap: 14px; padding: 13px 24px 0 15px; background: #333031; border: 1px solid #8a8a8a; border-radius: 10px; color: #fff; font-weight: 400; line-height: 23px; }
.popup strong { font-weight: 700; }
.popup .photo { margin-top: 6px; }
.popup .icon-btn { margin: 4px 0 0 auto; color: #1c1c1c; }
```
